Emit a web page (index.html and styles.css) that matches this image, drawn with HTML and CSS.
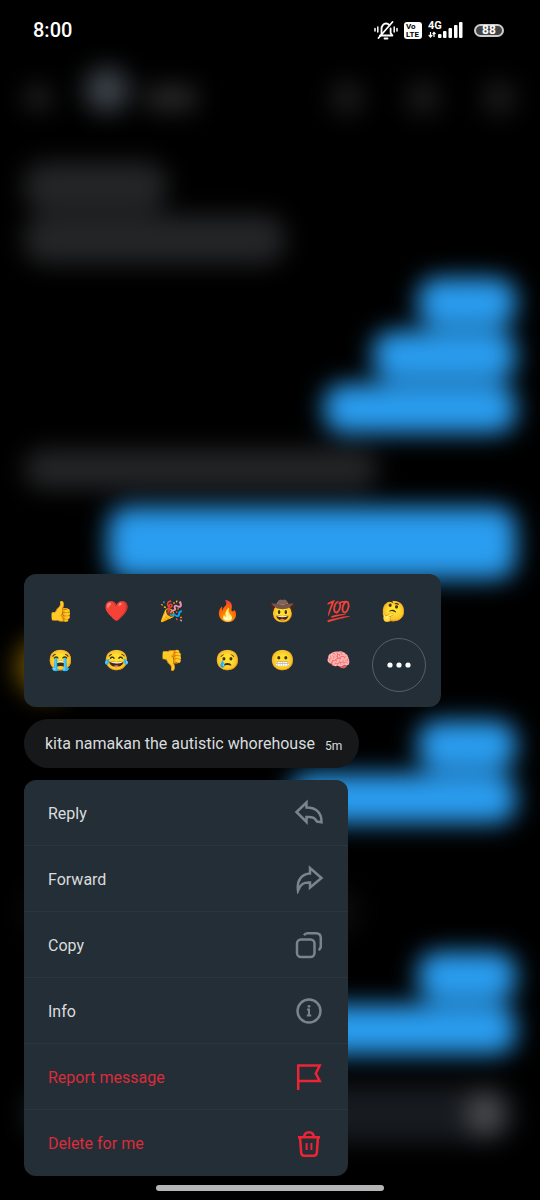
FILE: index.html
```html
<!DOCTYPE html>
<html lang="en">
<head>
    <meta charset="UTF-8">
    <meta name="viewport" content="width=device-width, initial-scale=1.0">
    <title>Message options</title>
    <link rel="stylesheet" href="styles.css">
</head>
<body>
    <div class="screen">
        <!-- blurred conversation behind the menu -->
        <div class="chat" aria-hidden="true">
            <div class="chat-header">
                <span class="dot"></span>
                <span class="avatar"></span>
                <span class="name"></span>
                <span class="tools"><i></i><i></i><i></i></span>
            </div>
            <div class="bubble in w-name"></div>
            <div class="bubble in w-half"></div>
            <div class="bubble out first w-short"></div>
            <div class="bubble out w-mid"></div>
            <div class="bubble out w-long"></div>
            <div class="bubble in w-wide"></div>
            <div class="bubble out tall w-full"></div>
            <div class="sticker"></div>
            <div class="bubble out w-short"></div>
            <div class="bubble out w-xlong"></div>
            <div class="bubble in faint"></div>
            <div class="bubble out w-short"></div>
            <div class="bubble out w-xlong"></div>
            <div class="composer"><i></i></div>
        </div>

        <div class="overlay">
            <header class="status-bar">
                <span class="clock">8:00</span>
                <div class="status-icons">
                    <svg width="24" height="22" viewBox="0 0 24 22" fill="none" stroke="#fff" stroke-width="1.8" stroke-linecap="round">
                        <path d="M6 16.5h12M7.5 15.5V10c0-3 2-5.500 4.500-5.500 1.500 0 2.600.7 3.400 1.700M16.600 9.500V14l1.800 2.500M10.500 19.500h3"/>
                        <path d="M4.500 19L18.500 3"/>
                        <path d="M3.800 8v5M1 9.500v2.500M20.200 8v5M23 9.500v2.500" stroke-width="1.5"/>
                    </svg>
                    <span class="volte"><b>Vo</b><b>LTE</b></span>
                    <svg class="signal" width="36" height="20" viewBox="0 0 36 20" fill="#fff">
                        <text x="0" y="9" class="net">4G</text>
                        <path d="M2.500 12v4.500M.7 15l1.800 2 1.800-2M6 17v-4.500M4.600 14L6 12.400 7.500 14" fill="none" stroke="#fff" stroke-width="1.2"/>
                        <rect x="10" y="14" width="3.500" height="4" rx="1"/>
                        <rect x="15" y="11" width="3.500" height="7" rx="1"/>
                        <rect x="20.500" y="8" width="3.500" height="10" rx="1"/>
                        <rect x="26" y="5" width="3.500" height="13" rx="1"/>
                        <rect x="31" y="2" width="3.500" height="16" rx="1"/>
                    </svg>
                    <span class="battery">88</span>
                </div>
            </header>

            <div class="reactions">
                <button>👍</button>
                <button>❤️</button>
                <button>🎉</button>
                <button>🔥</button>
                <button>🤠</button>
                <button>💯</button>
                <button>🤔</button>
                <button>😭</button>
                <button>😂</button>
                <button>👎</button>
                <button>😢</button>
                <button>😬</button>
                <button>🧠</button>
                <button class="more" aria-label="More reactions">
                    <svg width="24" height="6" viewBox="0 0 24 6" fill="#fff"><circle cx="3" cy="3" r="2.600"/><circle cx="12" cy="3" r="2.600"/><circle cx="21" cy="3" r="2.600"/></svg>
                </button>
            </div>

            <div class="message">
                <span>kita namakan the autistic whorehouse</span>
                <time>5m</time>
            </div>

            <div class="menu">
                <button>Reply
                    <svg width="30" height="30" viewBox="0 0 30 30"><path d="M12.500 4.500L2.500 14l10 10v-5c7-.5 8.500 1.500 10.500 4.500l4.500.8C27.700 15.500 23 9.500 12.500 9.500z"/></svg>
                </button>
                <button>Forward
                    <svg width="30" height="30" viewBox="0 0 30 30"><path d="M16 4l11.500 10L16 23.500v-5c-6.500-.3-9.500 1.500-12 8C2.500 16 8 9.800 16 9.500z"/></svg>
                </button>
                <button>Copy
                    <svg width="30" height="30" viewBox="0 0 30 30"><rect x="3" y="9.500" width="17.500" height="17.500" rx="4"/><path d="M10 5.200C11 3.700 12 3.200 13.500 3.200H22c3 0 4.800 1.800 4.800 4.800v8c0 2-.8 3.200-2.300 4"/></svg>
                </button>
                <button>Info
                    <svg width="30" height="30" viewBox="0 0 30 30"><circle cx="15" cy="15" r="11.500"/><path d="M13 13.500h2v6M12.800 19.500h4.400" stroke-width="2"/><circle class="fill" cx="15" cy="10.300" r="1.400"/></svg>
                </button>
                <button class="danger">Report message
                    <svg width="30" height="30" viewBox="0 0 30 30"><path d="M4.200 28V3.500h21.500L21.800 11.500l3.900 7.500H4.200"/></svg>
                </button>
                <button class="danger">Delete for me
                    <svg width="30" height="30" viewBox="0 0 30 30"><path d="M4 8.300h22M6 8.300l1.200 15.500c.2 1.900 1.200 2.900 3 2.900h9.600c1.800 0 2.800-1 3-2.900L24 8.300M10 8.300C10.300 5 12 3.200 15 3.200S19.700 5 20 8.300"/><path d="M12.600 14v7M17.400 14v7" stroke-width="2"/></svg>
                </button>
            </div>

            <div class="home-bar"></div>
        </div>
    </div>
</body>
</html>
```
FILE: styles.css
```css
* {
    box-sizing: border-box;
}
body {
    margin: 0;
    background: #000;
    color: #d9dcde;
    font-family: Roboto, "Noto Sans", sans-serif;
    font-size: 16px;
}
button {
    border: none;
    background: none;
    padding: 0;
    color: inherit;
    font: inherit;
    cursor: pointer;
}
svg {
    display: block;
}
.screen {
    position: relative;
    min-height: 100vh;
    overflow: hidden;
}

/* conversation in the back */
.chat {
    position: absolute;
    inset: 0;
    display: flex;
    flex-direction: column;
    gap: 4px;
    padding: 70px 24px 0;
    filter: blur(12px);
}
.chat-header {
    display: flex;
    align-items: center;
    height: 56px;
    margin-bottom: 32px;
}
.dot {
    width: 28px;
    height: 24px;
    border-radius: 12px;
    background: #242424;
}
.avatar {
    width: 46px;
    height: 46px;
    margin: 0 16px 16px 32px;
    border-radius: 50%;
    background: #3a4148;
}
.name {
    width: 50px;
    height: 24px;
    background: #2a2a2a;
}
.tools {
    display: flex;
    gap: 42px;
    margin-left: auto;
}
.tools i {
    width: 34px;
    height: 34px;
    border-radius: 50%;
    background: #1b1b1b;
}
.bubble {
    flex: none;
    height: 49px;
    border-radius: 20px;
}
.in {
    background: #242527;
}
.out {
    align-self: flex-end;
    background: #2a9df0;
}
.first {
    margin-top: 10px;
}
.tall {
    height: 72px;
    margin-top: 14px;
}
.w-name {
    width: 29%;
}
.w-half {
    width: 53%;
}
.w-short {
    width: 20%;
}
.w-mid {
    width: 29%;
}
.w-long {
    width: 39%;
}
.w-xlong {
    width: 46%;
}
.w-wide {
    width: 72%;
    height: 40px;
    margin-top: 12px;
}
.w-full {
    width: 83%;
}
.sticker {
    flex: none;
    width: 60px;
    height: 60px;
    margin: 54px 0 20px -8px;
    border-radius: 50%;
    background: #6e5200;
}
.faint {
    width: 68%;
    margin: 60px 0 12px;
    background: #0c0c0d;
}
.composer {
    flex: none;
    display: flex;
    align-items: center;
    justify-content: flex-end;
    height: 56px;
    margin-top: 28px;
    padding-right: 12px;
    border-radius: 28px;
    background: #171b20;
}
.composer i {
    width: 38px;
    height: 44px;
    border-radius: 50%;
    background: #484a4c;
}

/* top layer */
.overlay {
    position: relative;
    display: flex;
    flex-direction: column;
    align-items: flex-start;
    gap: 12px;
    min-height: 100vh;
    padding: 0 24px 9px;
}
.status-bar {
    display: flex;
    align-items: center;
    justify-content: space-between;
    align-self: stretch;
    height: 60px;
    margin-bottom: auto;
    padding: 0 12px 0 9px;
    color: #fff;
}
.clock {
    font-size: 20px;
    font-weight: 500;
}
.status-icons {
    display: flex;
    align-items: center;
    gap: 6px;
}
.volte {
    display: flex;
    flex-direction: column;
    width: 18px;
    height: 17px;
    padding: 1px 2px;
    border-radius: 3px;
    background: #fff;
    color: #000;
    font-size: 8px;
    line-height: 8px;
}
.net {
    font-size: 11px;
    font-weight: bold;
}
.battery {
    width: 30px;
    margin-left: 4px;
    border: 2px solid #ccc;
    border-radius: 7px;
    background: #444;
    font-size: 12px;
    font-weight: bold;
    line-height: 9px;
    text-align: center;
}
.reactions {
    display: grid;
    grid-template-columns: repeat(6, minmax(0, 1fr)) 60px;
    grid-template-rows: 49px 56px;
    width: 417px;
    max-width: 100%;
    padding: 13px 15px 15px 9px;
    border-radius: 12px;
    background: #242e36;
}
.reactions button {
    width: 56px;
    height: 48px;
    font-family: "Noto Color Emoji", sans-serif;
    font-size: 20px;
    line-height: 48px;
}
.reactions .more {
    display: grid;
    place-items: center;
    align-self: end;
    justify-self: end;
    width: 54px;
    height: 54px;
    border: 1px solid #56606a;
    border-radius: 50%;
}
.message {
    display: flex;
    align-items: center;
    gap: 10px;
    height: 49px;
    padding: 0 17px 0 21px;
    border-radius: 25px;
    background: #16181a;
}
.message time {
    padding-top: 4px;
    font-size: 12px;
}
.menu {
    width: 324px;
    border-radius: 12px;
    background: #242e36;
}
.menu button {
    display: flex;
    align-items: center;
    justify-content: space-between;
    width: 100%;
    height: 66px;
    padding: 1px 24px 0;
    border-bottom: 1px solid #2b353d;
}
.menu button:last-child {
    border-bottom: none;
}
.menu svg {
    fill: none;
    stroke: #7b848c;
    stroke-width: 2.5;
}
.menu .fill {
    fill: #7b848c;
    stroke: none;
}
.menu .danger {
    color: #dc2b3a;
}
.menu .danger svg {
    stroke: #ee2435;
}
.home-bar {
    align-self: center;
    width: 228px;
    height: 6px;
    margin-top: -3px;
    border-radius: 3px;
    background: #b5b4b6;
}
```
